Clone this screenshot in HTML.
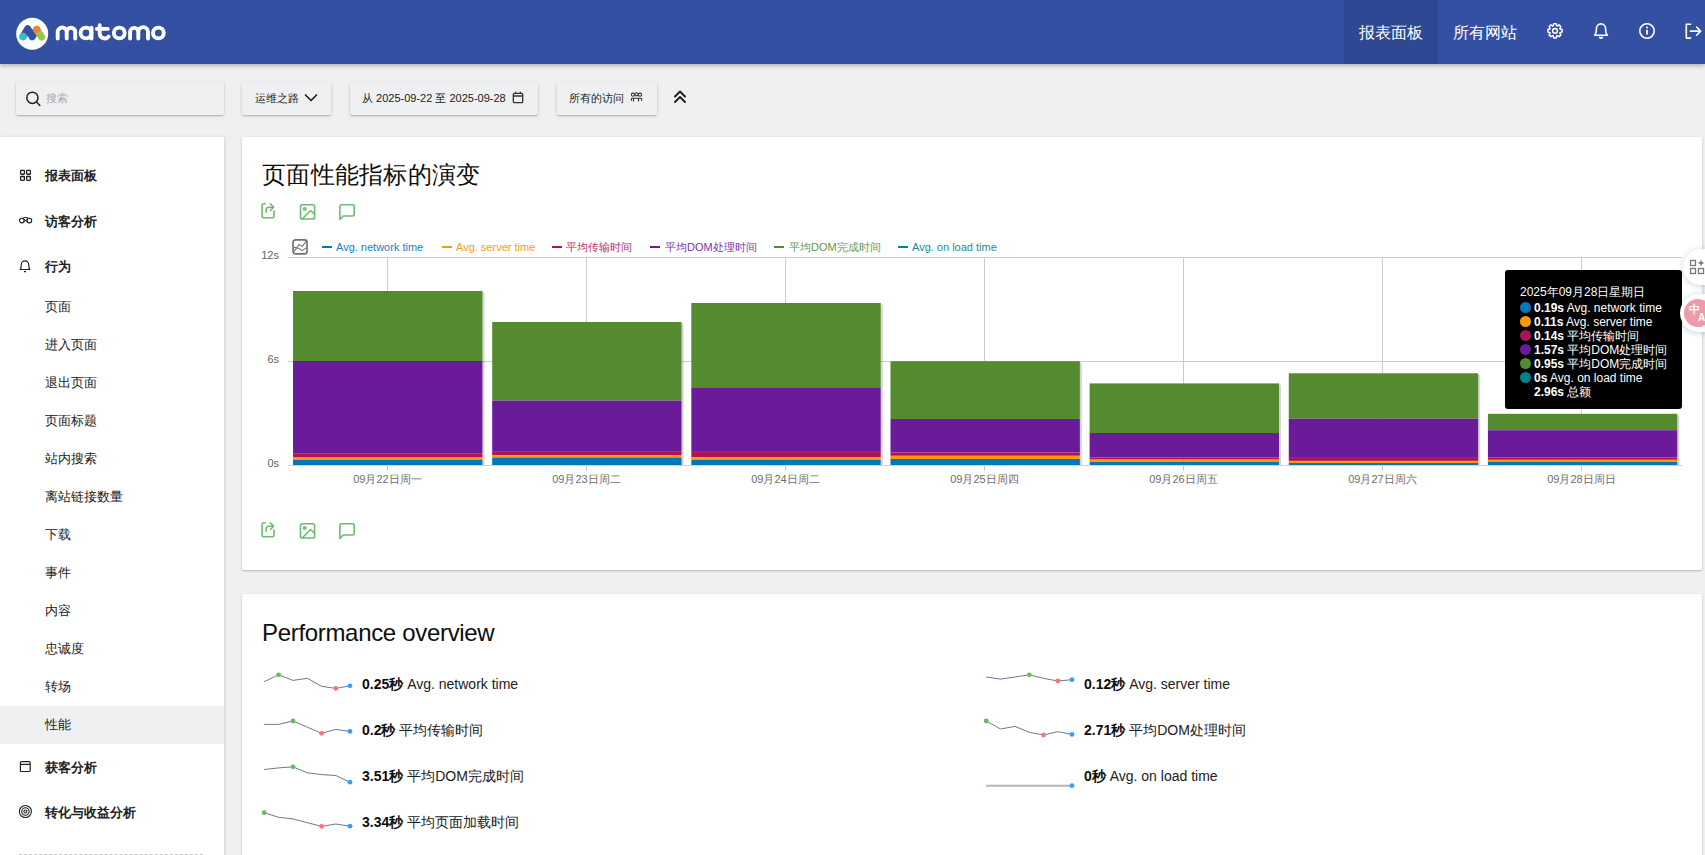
<!DOCTYPE html>
<html><head><meta charset="utf-8">
<style>
*{box-sizing:border-box}
html,body{margin:0;padding:0}
body{width:1705px;height:855px;overflow:hidden;position:relative;background:#eff0f1;font-family:"Liberation Sans",sans-serif;color:#212121}
.abs{position:absolute}
#hdr{left:0;top:0;width:1705px;height:64px;background:#3450a3;box-shadow:0 2px 4px rgba(0,0,0,.25);z-index:5}
.nav{top:0;height:64px;line-height:63px;color:#fff;font-size:16px;padding:1px 15px 0;white-space:nowrap}
.nav.act{background:#2f4893}
.tb{height:33px;top:82px;background:#eff0f1;border-radius:2px;box-shadow:0 1px 2px 0 rgba(0,0,0,.16),0 1px 4px 0 rgba(0,0,0,.09),0 2px 1px -1px rgba(0,0,0,.08);font-size:11px;color:#212121;line-height:33px;white-space:nowrap}
#side{left:0;top:137px;width:224px;height:730px;background:#fff;box-shadow:1px 0 3px rgba(0,0,0,.12)}
.mi{position:absolute;left:45px;font-size:13px;white-space:nowrap;line-height:13px}
.mb{font-weight:bold}
.card{background:#fff;border-radius:2px;box-shadow:0 1px 3px rgba(0,0,0,.2),0 1px 1px rgba(0,0,0,.06)}
.lg{position:absolute;top:241px;font-size:11px;line-height:13px;white-space:nowrap}
.lgd{position:absolute;top:246px;width:10px;height:2px}
.yl{position:absolute;font-size:11px;color:#666;line-height:11px;text-align:right;width:30px}
.xl{position:absolute;top:473px;font-size:11px;color:#6e6e6e;line-height:12px;width:120px;text-align:center}
.gv{position:absolute;top:257px;width:1px;height:208px;background:#ddd}
.gh{position:absolute;left:288px;width:1394px;height:1px;background:#ddd}
.bar{position:absolute;width:190px}
.bar div{width:100%}
.tt{font-size:12px;color:#fff;line-height:14px;white-space:nowrap}
.po{position:absolute;font-size:14px;white-space:nowrap;line-height:16px;color:#212121}
.po b{font-weight:bold;color:#0d0d0d}
</style></head><body>

<div id="hdr" class="abs">
  <!-- logo -->
  <svg class="abs" style="left:0;top:0" width="180" height="64" viewBox="0 0 180 64">
    <circle cx="32.2" cy="33.8" r="16" fill="#fff"/>
    <path d="M23.1,36.6 L27.7,28.7 L32.2,36.8 L36.7,29.5" fill="none" stroke="#3450a3" stroke-width="7" stroke-linecap="round" stroke-linejoin="round"/>
    <path d="M36.7,29.5 L41.6,37" fill="none" stroke="#95c748" stroke-width="7" stroke-linecap="round"/>
    <circle cx="23.05" cy="36.6" r="3.8" fill="#35bfc0"/>
    <circle cx="36.7" cy="29.5" r="3.6" fill="#f38334"/>
    <g fill="none" stroke="#fff" stroke-width="3.9" stroke-linecap="round" stroke-linejoin="round">
      <path d="M57.7,38.5 V32 A4.5,4.5 0 0 1 66.7,32 V38.5 M66.7,32 A4.25,4.25 0 0 1 75.2,32 V38.5"/>
      <circle cx="86" cy="33" r="5.4"/>
      <path d="M91.5,27.8 V38.5"/>
      <path d="M99.7,25.2 V33.5 A5,5 0 0 0 108.6,36.5 M96.9,28.9 H107.8"/>
      <circle cx="119.3" cy="33" r="5.4"/>
      <path d="M130.1,38.5 V32 A4.1,4.1 0 0 1 138.3,32 V38.5 M138.3,32 A4.85,4.85 0 0 1 148,32 V38.5"/>
      <circle cx="158.4" cy="33" r="5.4"/>
    </g>
  </svg>
  <div class="abs nav act" style="left:1344px;width:94px">报表面板</div>
  <div class="abs nav" style="left:1438px;width:94px">所有网站</div>
  <!-- gear -->
  <svg class="abs" style="left:1545px;top:21px" width="20" height="20" viewBox="0 0 20 20">
    <g transform="translate(10,9.8)" fill="none" stroke="#fff" stroke-width="1.5" stroke-linejoin="round">
      <path d="M-1.81,-4.98 L-1.25,-7.09 L1.25,-7.09 L1.81,-4.98 L2.24,-4.80 L4.13,-5.90 L5.90,-4.13 L4.80,-2.24 L4.98,-1.81 L7.09,-1.25 L7.09,1.25 L4.98,1.81 L4.80,2.24 L5.90,4.13 L4.13,5.90 L2.24,4.80 L1.81,4.98 L1.25,7.09 L-1.25,7.09 L-1.81,4.98 L-2.24,4.80 L-4.13,5.90 L-5.90,4.13 L-4.80,2.24 L-4.98,1.81 L-7.09,1.25 L-7.09,-1.25 L-4.98,-1.81 L-4.80,-2.24 L-5.90,-4.13 L-4.13,-5.90 L-2.24,-4.80 Z"/>
      <circle r="2.4"/>
    </g>
  </svg>
  <!-- bell -->
  <svg class="abs" style="left:1591px;top:20px" width="20" height="20" viewBox="0 0 20 20">
    <g fill="none" stroke="#fff" stroke-width="1.6" stroke-linejoin="round" stroke-linecap="round">
      <path d="M3.6,15.2 C5.2,13.8 5.4,12.5 5.4,8.5 A4.6,4.6 0 0 1 14.6,8.5 C14.6,12.5 14.8,13.8 16.4,15.2 Z"/>
      <path d="M8.6,17.4 Q10,18.8 11.4,17.4"/>
    </g>
  </svg>
  <!-- info -->
  <svg class="abs" style="left:1637px;top:21px" width="20" height="20" viewBox="0 0 20 20">
    <g fill="none" stroke="#fff" stroke-width="1.6">
      <circle cx="10" cy="10" r="7.2"/>
      <path d="M10,8.8 V13.6" stroke-width="1.8"/>
    </g>
    <circle cx="10" cy="6.4" r="1" fill="#fff"/>
  </svg>
  <!-- logout -->
  <svg class="abs" style="left:1683px;top:21px" width="22" height="20" viewBox="0 0 22 20">
    <g fill="none" stroke="#fff" stroke-width="1.6" stroke-linecap="round" stroke-linejoin="round">
      <path d="M7.6,3.3 H3.3 V17.1 H7.6"/>
      <path d="M7.4,10.1 H17.6 M13.6,6 L17.6,10.1 L13.6,14.2"/>
    </g>
  </svg>
</div>

<!-- toolbar -->
<div class="abs tb" style="left:16px;width:208px">
  <svg class="abs" style="left:9px;top:9px" width="16" height="16" viewBox="0 0 16 16"><g fill="none" stroke="#212121" stroke-width="1.5" stroke-linecap="round"><circle cx="7.4" cy="6.8" r="5.6"/><path d="M11.4,10.8 L14.8,14.4"/></g></svg>
  <span class="abs" style="left:30px;top:0;color:#aaa">搜索</span>
</div>
<div class="abs tb" style="left:242px;width:89px">
  <span class="abs" style="left:13px;top:0">运维之路</span>
  <svg class="abs" style="left:62px;top:11px" width="14" height="10" viewBox="0 0 14 10"><path d="M1.5,2 L7,7.5 L12.5,2" fill="none" stroke="#212121" stroke-width="1.7" stroke-linecap="round" stroke-linejoin="round"/></svg>
</div>
<div class="abs tb" style="left:350px;width:188px">
  <span class="abs" style="left:12px;top:0">从 2025-09-22 至 2025-09-28</span>
  <svg class="abs" style="left:162px;top:9px" width="12" height="14" viewBox="0 0 12 14"><g fill="none" stroke="#333" stroke-width="1.3"><rect x="1.3" y="2.3" width="9.4" height="9.4" rx="1.2"/><path d="M1.3,5 H10.7 M3.6,0.8 V3 M8.4,0.8 V3"/></g></svg>
</div>
<div class="abs tb" style="left:557px;width:100px">
  <span class="abs" style="left:12px;top:0">所有的访问</span>
  <svg class="abs" style="left:73px;top:9px" width="14" height="12" viewBox="0 0 14 12"><g fill="none" stroke="#333" stroke-width="1.1"><circle cx="3" cy="3.7" r="1.6"/><circle cx="6.5" cy="3.3" r="1.6"/><circle cx="10" cy="3.7" r="1.6"/><path d="M1.4,9.8 V8 Q1.4,7.3 2.5,7.3 H10.5 Q11.6,7.3 11.6,8 V9.8 M3.5,10.4 V7.5 M8.5,10.4 V7.5"/></g></svg>
</div>
<svg class="abs" style="left:672px;top:88px" width="16" height="18" viewBox="0 0 16 18"><g fill="none" stroke="#212121" stroke-width="2" stroke-linecap="round" stroke-linejoin="round"><path d="M3,8.5 L8,3.5 L13,8.5"/><path d="M3,14 L8,9 L13,14"/></g></svg>

<!-- sidebar -->
<div id="side" class="abs">
  <svg class="abs" style="left:18px;top:32px" width="14" height="14" viewBox="0 0 14 14"><g fill="none" stroke="#212121" stroke-width="1.3"><rect x="2.6" y="1.45" width="3.8" height="3.8" rx=".5"/><rect x="8.6" y="1.45" width="3.8" height="3.8" rx=".5"/><rect x="2.6" y="7.5" width="3.8" height="3.8" rx=".5"/><rect x="8.6" y="7.5" width="3.8" height="3.8" rx=".5"/></g></svg>
  <div class="mi mb" style="top:32px">报表面板</div>
  <svg class="abs" style="left:18px;top:78px" width="16" height="10" viewBox="0 0 16 10"><g fill="none" stroke="#212121" stroke-width="1.15"><circle cx="3.8" cy="5.5" r="2.3"/><circle cx="11.4" cy="5.5" r="2.3"/><path d="M4.6,3.4 Q7.6,1.6 10.6,3.4"/><path d="M5.9,4.3 L9.3,6.7 M9.3,4.3 L5.9,6.7" stroke-width="1"/></g></svg>
  <div class="mi mb" style="top:78px">访客分析</div>
  <svg class="abs" style="left:18px;top:122px" width="14" height="14" viewBox="0 0 14 14"><g fill="none" stroke="#212121" stroke-width="1.2" stroke-linejoin="round"><path d="M2.2,10.5 C3.2,9.5 3.3,8.5 3.3,5.5 A3.7,3.7 0 0 1 10.7,5.5 C10.7,8.5 10.8,9.5 11.8,10.5 Z"/><path d="M6,12.6 H8"/></g></svg>
  <div class="mi mb" style="top:123px">行为</div>
  <div class="mi" style="top:163px">页面</div>
  <div class="mi" style="top:201px">进入页面</div>
  <div class="mi" style="top:239px">退出页面</div>
  <div class="mi" style="top:277px">页面标题</div>
  <div class="mi" style="top:315px">站内搜索</div>
  <div class="mi" style="top:353px">离站链接数量</div>
  <div class="mi" style="top:391px">下载</div>
  <div class="mi" style="top:429px">事件</div>
  <div class="mi" style="top:467px">内容</div>
  <div class="mi" style="top:505px">忠诚度</div>
  <div class="mi" style="top:543px">转场</div>
  <div class="abs" style="left:0;top:569px;width:224px;height:38px;background:#eef0f2"></div>
  <div class="mi" style="top:581px">性能</div>
  <svg class="abs" style="left:18px;top:623px" width="14" height="14" viewBox="0 0 14 14"><g fill="none" stroke="#212121" stroke-width="1.2"><rect x="2.4" y="1.6" width="9.8" height="9.9" rx="1"/><path d="M2.4,4.4 H12.2"/></g></svg>
  <div class="mi mb" style="top:624px">获客分析</div>
  <svg class="abs" style="left:18px;top:667px" width="15" height="15" viewBox="0 0 15 15"><g fill="none" stroke="#212121" stroke-width="1.1"><circle cx="7.4" cy="7.5" r="6"/><circle cx="7.4" cy="7.5" r="3.7"/><circle cx="7.4" cy="7.5" r="1.5"/></g></svg>
  <div class="mi mb" style="top:669px">转化与收益分析</div>
  <div class="abs" style="left:19px;top:717px;width:184px;border-top:1px dashed #c4c4c4"></div>
</div>

<!-- card 1 -->
<div class="abs card" style="left:242px;top:137px;width:1460px;height:433px"></div>
<div class="abs" style="left:262px;top:161px;font-size:24px;line-height:28px;color:#0d0d0d;white-space:nowrap;letter-spacing:0.25px">页面性能指标的演变</div>
<div id="ico1" class="abs" style="left:256px;top:198px">
<svg width="104" height="26" viewBox="0 0 104 26"><g id="ico1g" fill="none" stroke="#6fba73" stroke-width="1.6" stroke-linecap="round" stroke-linejoin="round">
<path d="M9.2,5.8 H7.8 Q6.1,5.8 6.1,7.5 V18.2 Q6.1,19.8 7.8,19.8 H16.3 Q18,19.8 18,18.2 V13.1"/>
<path d="M10.1,14.3 V12.2 Q10.1,9.2 13,9.2 H17.6 M14.3,5.8 L17.7,9.2 L14.3,12.5"/>
<rect x="44.5" y="6.7" width="14.1" height="14.3" rx="1.8"/>
<circle cx="48.7" cy="11" r="1.2"/>
<path d="M46.4,20.7 L54.6,12.5 L58.6,16.3"/>
<path d="M83.9,21.4 V8.2 Q83.9,6.7 85.4,6.7 H96.7 Q98.2,6.7 98.2,8.2 V16.5 Q98.2,18 96.7,18 H87.2 Z"/>
</g></svg></div>
<div class="abs" style="left:256px;top:517px"><svg width="104" height="26" viewBox="0 0 104 26"><use href="#ico1g"/></svg></div>
<!-- chart icon -->
<svg class="abs" style="left:291px;top:238px" width="18" height="18" viewBox="0 0 18 18"><g fill="none" stroke="#707070" stroke-linejoin="round"><rect x="2" y="1.8" width="14" height="14.1" rx="2.4" stroke-width="1.65"/><path d="M2.9,13.7 L8.2,6.4 L11.3,8.4 L15,3.5" stroke-width="1.1"/><path d="M2.9,9.2 L7.4,10.3 L11.3,12.6 L15,9.9" stroke-width="1.1"/></g></svg>
<!-- legend -->
<div class="lgd" style="left:322px;background:#0277bd"></div><div class="lg" style="left:336px;color:#1e7ec2">Avg. network time</div>
<div class="lgd" style="left:442px;background:#ff9800"></div><div class="lg" style="left:456px;color:#fa9a1c">Avg. server time</div>
<div class="lgd" style="left:552px;background:#ad1457"></div><div class="lg" style="left:566px;color:#b6306c">平均传输时间</div>
<div class="lgd" style="left:650px;background:#6a1b9a"></div><div class="lg" style="left:665px;color:#7a37a6">平均DOM处理时间</div>
<div class="lgd" style="left:774px;background:#558b2f"></div><div class="lg" style="left:789px;color:#67974a">平均DOM完成时间</div>
<div class="lgd" style="left:898px;background:#00838f"></div><div class="lg" style="left:912px;color:#1e8d98">Avg. on load time</div>
<div class="yl" style="left:249px;top:250px">12s</div>
<div class="yl" style="left:249px;top:354px">6s</div>
<div class="yl" style="left:249px;top:458px">0s</div>
<svg class="abs" style="left:0;top:0" width="1705" height="855" viewBox="0 0 1705 855">
<path d="M288,257.5 H1682" stroke="#cccccc" stroke-width="1"/>
<path d="M288,361.5 H1682" stroke="#cccccc" stroke-width="1"/>
<path d="M387.5,257 V465" stroke="#cccccc" stroke-width="1"/>
<path d="M387.5,466 V471" stroke="#c8c8c8" stroke-width="1"/>
<path d="M586.5,257 V465" stroke="#cccccc" stroke-width="1"/>
<path d="M586.5,466 V471" stroke="#c8c8c8" stroke-width="1"/>
<path d="M785.5,257 V465" stroke="#cccccc" stroke-width="1"/>
<path d="M785.5,466 V471" stroke="#c8c8c8" stroke-width="1"/>
<path d="M984.5,257 V465" stroke="#cccccc" stroke-width="1"/>
<path d="M984.5,466 V471" stroke="#c8c8c8" stroke-width="1"/>
<path d="M1183.5,257 V465" stroke="#cccccc" stroke-width="1"/>
<path d="M1183.5,466 V471" stroke="#c8c8c8" stroke-width="1"/>
<path d="M1382.5,257 V465" stroke="#cccccc" stroke-width="1"/>
<path d="M1382.5,466 V471" stroke="#c8c8c8" stroke-width="1"/>
<path d="M1581.5,257 V465" stroke="#cccccc" stroke-width="1"/>
<path d="M1581.5,466 V471" stroke="#c8c8c8" stroke-width="1"/>
<rect x="482.44" y="292.50" width="2" height="172.50" fill="rgba(0,0,0,0.17)"/>
<rect x="293.04" y="291.00" width="189.40" height="70.00" fill="#558b2f"/>
<rect x="293.04" y="361.00" width="189.40" height="92.20" fill="#6a1b9a"/>
<rect x="293.04" y="453.20" width="189.40" height="4.30" fill="#ad1457"/>
<rect x="293.04" y="457.50" width="189.40" height="2.50" fill="#ff9800"/>
<rect x="293.04" y="460.00" width="189.40" height="5.00" fill="#0277bd"/>
<rect x="681.59" y="323.50" width="2" height="141.50" fill="rgba(0,0,0,0.17)"/>
<rect x="492.19" y="322.00" width="189.40" height="78.60" fill="#558b2f"/>
<rect x="492.19" y="400.60" width="189.40" height="50.50" fill="#6a1b9a"/>
<rect x="492.19" y="451.10" width="189.40" height="4.30" fill="#ad1457"/>
<rect x="492.19" y="455.40" width="189.40" height="2.10" fill="#ff9800"/>
<rect x="492.19" y="457.50" width="189.40" height="7.50" fill="#0277bd"/>
<rect x="880.73" y="304.50" width="2" height="160.50" fill="rgba(0,0,0,0.17)"/>
<rect x="691.33" y="303.00" width="189.40" height="85.00" fill="#558b2f"/>
<rect x="691.33" y="388.00" width="189.40" height="63.90" fill="#6a1b9a"/>
<rect x="691.33" y="451.90" width="189.40" height="5.30" fill="#ad1457"/>
<rect x="691.33" y="457.20" width="189.40" height="2.60" fill="#ff9800"/>
<rect x="691.33" y="459.80" width="189.40" height="5.20" fill="#0277bd"/>
<rect x="1079.88" y="362.70" width="2" height="102.30" fill="rgba(0,0,0,0.17)"/>
<rect x="890.48" y="361.20" width="189.40" height="57.80" fill="#558b2f"/>
<rect x="890.48" y="419.00" width="189.40" height="33.50" fill="#6a1b9a"/>
<rect x="890.48" y="452.50" width="189.40" height="3.30" fill="#ad1457"/>
<rect x="890.48" y="455.80" width="189.40" height="3.20" fill="#ff9800"/>
<rect x="890.48" y="459.00" width="189.40" height="6.00" fill="#0277bd"/>
<rect x="1279.02" y="384.90" width="2" height="80.10" fill="rgba(0,0,0,0.17)"/>
<rect x="1089.62" y="383.40" width="189.40" height="49.60" fill="#558b2f"/>
<rect x="1089.62" y="433.00" width="189.40" height="24.50" fill="#6a1b9a"/>
<rect x="1089.62" y="457.50" width="189.40" height="2.10" fill="#ad1457"/>
<rect x="1089.62" y="459.60" width="189.40" height="2.30" fill="#ff9800"/>
<rect x="1089.62" y="461.90" width="189.40" height="3.10" fill="#0277bd"/>
<rect x="1478.17" y="374.80" width="2" height="90.20" fill="rgba(0,0,0,0.17)"/>
<rect x="1288.77" y="373.30" width="189.40" height="45.40" fill="#558b2f"/>
<rect x="1288.77" y="418.70" width="189.40" height="39.20" fill="#6a1b9a"/>
<rect x="1288.77" y="457.90" width="189.40" height="3.00" fill="#ad1457"/>
<rect x="1288.77" y="460.90" width="189.40" height="2.10" fill="#ff9800"/>
<rect x="1288.77" y="463.00" width="189.40" height="2.00" fill="#0277bd"/>
<rect x="1677.31" y="415.30" width="2" height="49.70" fill="rgba(0,0,0,0.17)"/>
<rect x="1487.91" y="413.80" width="189.40" height="16.40" fill="#558b2f"/>
<rect x="1487.91" y="430.20" width="189.40" height="27.20" fill="#6a1b9a"/>
<rect x="1487.91" y="457.40" width="189.40" height="2.40" fill="#ad1457"/>
<rect x="1487.91" y="459.80" width="189.40" height="2.00" fill="#ff9800"/>
<rect x="1487.91" y="461.80" width="189.40" height="3.20" fill="#0277bd"/>
<path d="M288,465.5 H1682" stroke="#d4d0cc" stroke-width="1"/>
</svg>
<div class="xl" style="left:327.5px">09月22日周一</div>
<div class="xl" style="left:526.5px">09月23日周二</div>
<div class="xl" style="left:725.5px">09月24日周二</div>
<div class="xl" style="left:924.5px">09月25日周四</div>
<div class="xl" style="left:1123.5px">09月26日周五</div>
<div class="xl" style="left:1322.5px">09月27日周六</div>
<div class="xl" style="left:1521.5px">09月28日周日</div>
<!-- card 2 -->
<div class="abs card" style="left:242px;top:594px;width:1460px;height:300px"></div>
<div class="abs" style="left:262px;top:618.5px;font-size:24px;line-height:28px;color:#0d0d0d;white-space:nowrap;letter-spacing:-0.32px">Performance overview</div>
<svg class="abs" style="left:0;top:0" width="1705" height="855" viewBox="0 0 1705 855">
<path d="M264.2,681.7 L278.6,674.8 L293.0,680.4 L307.4,678.3 L321.6,686.3 L335.8,688.4 L350.0,685.8" fill="none" stroke="#6b7a8f" stroke-width="1" stroke-linejoin="round"/>
<circle cx="278.6" cy="674.8" r="2.4" fill="#66bb6a"/>
<circle cx="335.8" cy="688.4" r="2.4" fill="#ff7373"/>
<circle cx="350.0" cy="685.8" r="2.4" fill="#3d9bff"/>
<path d="M264.2,724.4 L278.6,724.4 L293.0,721.0 L307.4,727.2 L321.6,733.3 L335.8,729.4 L350.0,731.4" fill="none" stroke="#6b7a8f" stroke-width="1" stroke-linejoin="round"/>
<circle cx="293.0" cy="721.0" r="2.4" fill="#66bb6a"/>
<circle cx="321.6" cy="733.3" r="2.4" fill="#ff7373"/>
<circle cx="350.0" cy="731.4" r="2.4" fill="#3d9bff"/>
<path d="M264.2,769.5 L278.6,767.9 L293.0,766.8 L307.4,772.8 L321.6,774.6 L335.8,775.5 L350.0,782.2" fill="none" stroke="#6b7a8f" stroke-width="1" stroke-linejoin="round"/>
<circle cx="293.0" cy="766.8" r="2.4" fill="#66bb6a"/>
<circle cx="350.0" cy="782.2" r="2.4" fill="#3d9bff"/>
<path d="M264.2,812.7 L278.6,817.3 L293.0,818.9 L307.4,822.7 L321.6,826.4 L335.8,824.0 L350.0,826.2" fill="none" stroke="#6b7a8f" stroke-width="1" stroke-linejoin="round"/>
<circle cx="264.2" cy="812.7" r="2.4" fill="#66bb6a"/>
<circle cx="321.6" cy="826.4" r="2.4" fill="#ff7373"/>
<circle cx="350.0" cy="826.2" r="2.4" fill="#3d9bff"/>
<path d="M986.2,677.0 L1000.6,679.1 L1015.0,677.0 L1029.3,674.8 L1043.6,678.3 L1057.8,681.0 L1072.0,679.7" fill="none" stroke="#6b7a8f" stroke-width="1" stroke-linejoin="round"/>
<circle cx="1029.3" cy="674.8" r="2.4" fill="#66bb6a"/>
<circle cx="1057.8" cy="681.0" r="2.4" fill="#ff7373"/>
<circle cx="1072.0" cy="679.7" r="2.4" fill="#3d9bff"/>
<path d="M986.2,721.0 L1000.6,729.0 L1015.0,726.4 L1029.3,732.3 L1043.6,735.0 L1057.8,731.7 L1072.0,734.4" fill="none" stroke="#6b7a8f" stroke-width="1" stroke-linejoin="round"/>
<circle cx="986.2" cy="721.0" r="2.4" fill="#66bb6a"/>
<circle cx="1043.6" cy="735.0" r="2.4" fill="#ff7373"/>
<circle cx="1072.0" cy="734.4" r="2.4" fill="#3d9bff"/>
<path d="M986.2,785.7 H1072" fill="none" stroke="#aeb7c2" stroke-width="2"/>
<circle cx="1072" cy="785.7" r="2.4" fill="#3d9bff"/>
</svg>
<div class="po" style="left:362px;top:676px"><b>0.25秒</b> Avg. network time</div>
<div class="po" style="left:362px;top:722px"><b>0.2秒</b> 平均传输时间</div>
<div class="po" style="left:362px;top:768px"><b>3.51秒</b> 平均DOM完成时间</div>
<div class="po" style="left:362px;top:814px"><b>3.34秒</b> 平均页面加载时间</div>
<div class="po" style="left:1084px;top:676px"><b>0.12秒</b> Avg. server time</div>
<div class="po" style="left:1084px;top:722px"><b>2.71秒</b> 平均DOM处理时间</div>
<div class="po" style="left:1084px;top:768px"><b>0秒</b> Avg. on load time</div>

<!-- tooltip -->
<div class="abs" style="left:1505px;top:270px;width:177px;height:139px;background:#000;border-radius:3px"></div>
<div class="abs tt" style="left:1520px;top:285px">2025年09月28日星期日</div>
<div class="abs tt" style="left:1520px;top:301px"><span style="display:inline-block;width:11px;height:11px;border-radius:50%;background:#0277bd;vertical-align:-1px;margin-right:3px"></span><b>0.19s</b> Avg. network time</div>
<div class="abs tt" style="left:1520px;top:315px"><span style="display:inline-block;width:11px;height:11px;border-radius:50%;background:#ff9800;vertical-align:-1px;margin-right:3px"></span><b>0.11s</b> Avg. server time</div>
<div class="abs tt" style="left:1520px;top:329px"><span style="display:inline-block;width:11px;height:11px;border-radius:50%;background:#ad1457;vertical-align:-1px;margin-right:3px"></span><b>0.14s</b> 平均传输时间</div>
<div class="abs tt" style="left:1520px;top:343px"><span style="display:inline-block;width:11px;height:11px;border-radius:50%;background:#6a1b9a;vertical-align:-1px;margin-right:3px"></span><b>1.57s</b> 平均DOM处理时间</div>
<div class="abs tt" style="left:1520px;top:357px"><span style="display:inline-block;width:11px;height:11px;border-radius:50%;background:#558b2f;vertical-align:-1px;margin-right:3px"></span><b>0.95s</b> 平均DOM完成时间</div>
<div class="abs tt" style="left:1520px;top:371px"><span style="display:inline-block;width:11px;height:11px;border-radius:50%;background:#00838f;vertical-align:-1px;margin-right:3px"></span><b>0s</b> Avg. on load time</div>
<div class="abs tt" style="left:1534px;top:385px"><b>2.96s</b> 总额</div>
<!-- floating overlays -->
<div class="abs" style="left:1683px;top:249px;width:40px;height:36px;border-radius:18px;background:#fff;box-shadow:0 1px 6px rgba(0,0,0,.18)"></div>
<svg class="abs" style="left:1688px;top:258px" width="17" height="18" viewBox="0 0 17 18"><g fill="none" stroke="#777" stroke-width="1.3"><rect x="2.5" y="2.5" width="5" height="5"/><rect x="2.5" y="10.5" width="5" height="5"/><rect x="10.5" y="10.5" width="5" height="5"/></g><path d="M13,1.5 L14,4 L16.5,5 L14,6 L13,8.5 L12,6 L9.5,5 L12,4 Z" fill="#777"/></svg>
<div class="abs" style="left:1680px;top:294px;width:44px;height:38px;border-radius:19px;background:#fff;box-shadow:0 1px 6px rgba(0,0,0,.2)"></div>
<div class="abs" style="left:1684px;top:299px;width:28px;height:28px;border-radius:14px;background:#ee9aaa"></div>
<div class="abs" style="left:1689px;top:304px;font-size:11px;line-height:11px;color:#fff;font-weight:bold">中</div>
<div class="abs" style="left:1698px;top:313px;font-size:10px;line-height:10px;color:#fff;font-weight:bold">A</div>
</body></html>
